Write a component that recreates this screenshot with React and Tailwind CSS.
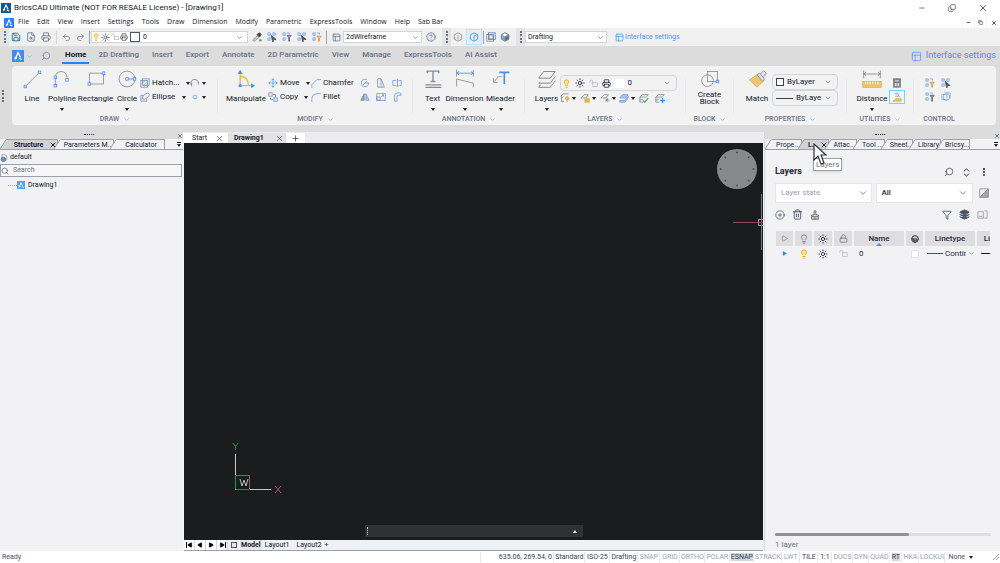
import { Search, X, Undo2, Redo2, Save, Printer, Lightbulb, Sun, ChevronDown, CirclePlus, Trash2, Funnel, Layers, FileSearch, EllipsisVertical, ChevronsUpDown, CircleQuestionMark, Minus, Copy, Plus, Lock, Contrast, PanelsTopLeft, Play, Move } from 'lucide-react'
import clsx from 'clsx'

const menus = ['File', 'Edit', 'View', 'Insert', 'Settings', 'Tools', 'Draw', 'Dimension', 'Modify', 'Parametric', 'ExpressTools', 'Window', 'Help', 'Sab Bar']
const ribbonTabs = ['Home', '2D Drafting', 'Insert', 'Export', 'Annotate', '2D Parametric', 'View', 'Manage', 'ExpressTools', 'AI Assist']

const statusFields = [
  { label: '635.06, 269.54, 0', width: 'w-[57px]', on: true },
  { label: 'Standard', width: 'w-[31px]', on: true },
  { label: 'ISO-25', width: 'w-[25px]', on: true },
  { label: 'Drafting', width: 'w-[28px]', on: true },
  { label: 'SNAP', width: 'w-[22px]' },
  { label: 'GRID', width: 'w-[20px]' },
  { label: 'ORTHO', width: 'w-[25px]' },
  { label: 'POLAR', width: 'w-[25px]' },
  { label: 'ESNAP', width: 'w-[24px]', on: true, fill: true },
  { label: 'STRACK', width: 'w-[28px]' },
  { label: 'LWT', width: 'w-[18px]' },
  { label: 'TILE', width: 'w-[18px]', on: true },
  { label: '1:1', width: 'w-[14px]', on: true },
  { label: 'DUCS', width: 'w-[21px]' },
  { label: 'DYN', width: 'w-[16px]' },
  { label: 'QUAD', width: 'w-[21px]' },
  { label: 'RT', width: 'w-[12px]', on: true, fill: true },
  { label: 'HKA', width: 'w-[17px]' },
  { label: 'LOCKUI', width: 'w-[26px]' },
]

function Svg({ box = 12, className = 'size-[10px]', children }) {
  return (
    <svg viewBox={`0 0 ${box} ${box}`} className={clsx('shrink-0', className)} fill="none" stroke="#868b93" strokeWidth="1" aria-hidden>
      {children}
    </svg>
  )
}

function Node({ x, y }) {
  return <rect x={x - 1.5} y={y - 1.5} width="3" height="3" fill="#fff" stroke="#4c8df5" />
}

function Logo({ className }) {
  return (
    <svg viewBox="0 0 12 12" className={clsx('block shrink-0', className)} fill="none" aria-hidden>
      <path d="M3 9.500 6 2.500 8.500 7.500" stroke="#fff" strokeWidth="1.300" />
      <path d="M2.500 7.500 5 8.200M7 8.500l3 1" stroke="#fff" strokeWidth="1.300" />
    </svg>
  )
}

function Caret({ className }) {
  return (
    <svg viewBox="0 0 4 3" className={clsx('h-[3px] w-[4px] shrink-0', className)} fill="#222" aria-hidden>
      <path d="M0 0h4L2 3z" />
    </svg>
  )
}

function Chevron({ className = 'size-[8px] text-gray-500' }) {
  return <ChevronDown className={clsx('pointer-events-none shrink-0', className)} strokeWidth={2} />
}

function Grip() {
  return <span className="h-[12px] border-l-2 border-dotted border-gray-500" />
}

function Combo({ label, value, className, selectClass, children, chevron }) {
  return (
    <div className={clsx('flex items-center', className)}>
      {children}
      <select aria-label={label} className={clsx('min-w-0 flex-1 appearance-none bg-transparent outline-none', selectClass)}>
        <option>{value}</option>
      </select>
      <Chevron className={chevron} />
    </div>
  )
}

/* 24 unit drawings for the big ribbon buttons */
const big = {
  line: <><path d="M4 21 21 4" /><Node x={4} y={21} /><Node x={21} y={4} /></>,
  polyline: <><path d="M4 20V10a7 7 0 0 1 14 0v3" /><Node x={4} y={20} /><Node x={4} y={10} /><Node x={18} y={13} /></>,
  rect: <><rect x="4" y="5" width="17" height="13" /><Node x={4} y={18} /><Node x={21} y={5} /></>,
  circle: <><circle cx="12" cy="12" r="9.5" /><path d="M12 12h9" stroke="#4c8df5" /><Node x={12} y={12} /><Node x={21} y={12} /></>,
  manipulate: <><path d="M5 3v17h15M5 9c7 0 10 4 10 11" stroke="#e8b748" strokeWidth="1.6" /><path d="M2 6l3-5 3 5zM18 17l5 3-5 3z" fill="#4c8df5" stroke="none" /><circle cx="5" cy="20" r="2" fill="#4c8df5" stroke="none" /></>,
  text: <><path d="M5 5V2.500h14V5M12 2.500V15M9 15h6" strokeWidth="1.600" /><path d="M3 19h19M3 22h19" strokeWidth="1.4" /></>,
  dimension: <><path d="M2 1v8M22 1v8" /><path d="M2 5h20M5 3 2 5l3 2M19 3l3 2-3 2" stroke="#4c8df5" /><path d="M2 21V12l20 5v5" /></>,
  mleader: <><path d="M10 4h12M16 4v14" stroke="#4c8df5" strokeWidth="2" /><path d="M13 9H9l-5 6M3 11v5h5" /></>,
  layers: <><path d="M2 11 8 3h14l-6 8zM4 15l-2 2h14l6-8M4 19l-2 3h14l6-8" strokeWidth="1.200" /></>,
  block: <><circle cx="9" cy="14" r="7" /><rect x="9" y="3" width="12" height="12" /><Node x={21} y={15} /></>,
  match: <><path d="m3 13 9-6 7 8-7 7z" fill="#ecc773" stroke="#d9aa45" /><path d="m12 7 3-2 6 7-2 3zM16 6l4-4 3 3-3 5" fill="#dfe3e8" /></>,
  distance: <><path d="M2 2v9M22 2v9M2 6h20M5 4 2 6l3 2M19 4l3 2-3 2" /><path d="M1 15h22v7H1z" fill="#ecc773" stroke="#d9aa45" /><path d="M4 15v3M7 15v3M10 15v3M13 15v3M16 15v3M19 15v3" stroke="#fff" /></>,
}

/* 12 unit drawings for the small ones */
const small = {
  hatch: <><rect x="1" y="3" width="8" height="8" /><rect x="3" y="1" width="8" height="8" stroke="#6f9de8" /><path d="m3 6 3-3M4 9l5-5M7 9l3-3" stroke="#6f9de8" /></>,
  ellipse: <><path d="M1 11V4h4M1 11h7V8" /><ellipse cx="7" cy="5" rx="5" ry="2.500" transform="rotate(-40 7 5)" stroke="#6f9de8" /></>,
  arc: <><path d="M2 9a4.500 4.500 0 1 1 8-3" stroke="#6f7680" /><path d="M2 6v4M10 5v3" stroke="#4c8df5" /></>,
  point: <circle cx="6" cy="6" r="2.300" stroke="#6fa4f5" />,
  copy: <><rect x="1" y="1" width="4" height="4" /><rect x="7" y="7" width="4" height="4" stroke="#4c8df5" /><path d="M3 7v2h3M6 3h3v3" stroke="#4c8df5" /></>,
  chamfer: <path d="M1 12V8l6-6h5" stroke="#6f9de8" />,
  fillet: <path d="M1 12V9q0-7 7-7h4" stroke="#6f9de8" />,
  rotate: <><circle cx="6" cy="6" r="4.500" stroke="#6f9de8" strokeDasharray="23 4" /><path d="M4 8l4-4M6 6h4" /></>,
  stretch: <><path d="M2 11V1h4l4 10z" /><path d="M6 1v10" stroke="#6f9de8" /></>,
  split: <><path d="M5 3H1v6h4M8 3h3v6H8" stroke="#6f9de8" /><path d="M6.500 1v10" /></>,
  mirror: <><path d="M5 2v8H1z" fill="#9ba1a9" /><path d="M7 2v8h4z" fill="#a9c7f6" stroke="#6f9de8" /></>,
  scale: <><rect x="1" y="2" width="10" height="8" stroke="#6f9de8" /><rect x="1" y="6" width="4" height="4" /><path d="M6 6l3-2.500M7 3.500h2v2" /></>,
  offset: <><path d="M3 11V5q0-4 4-4h2q2 0 2 3H8q-2 0-2 2v5z" stroke="#6f9de8" /></>,
  layerOn: <><path d="M1 4 4 1h6M1 7l3-3M1 10h4" /><path d="M2 2v8" /><circle cx="8.500" cy="6.500" r="2" fill="#f0b64a" stroke="#e2a33a" /><path d="M8.500 9v2" /></>,
  layerLock: <><path d="m1 6 4-4h5L7 6z" /><rect x="6" y="7" width="5" height="4" fill="#f0b64a" stroke="#e2a33a" /></>,
  layerFreeze: <><path d="m1 6 4-4h5L7 6z" /><path d="M8.500 6v5M6 8.500h5M7 7l3 3M10 7l-3 3" /></>,
  layerMatch: <><path d="m1 6 3-4h7L8 6zM1 9h6l4-5v2L7 11H1z" fill="#a8c8fa" stroke="#6f9de8" /></>,
  layerCheck: <><path d="m1 5 3-3h7L8 5zM1 8h4M1 11h4M1 5v6" /><path d="m5 9 2 2 4-5" stroke="#51b34c" strokeWidth="1.500" /></>,
  layerAdd: <><path d="m1 5 3-3h7L8 5zM1 8h4M1 11h4M1 5v6" /><path d="M9 6v6M6 9h6" stroke="#3f86f2" strokeWidth="1.500" /></>,
  calc: <><rect x="2" y="1" width="8" height="10" fill="#777b82" stroke="#777b82" /><path d="M3.500 3.500h5M4 6v4M6 6v4M8 6v4" stroke="#fff" /></>,
  area: <><path d="M1 11h10V8H5z" fill="#f0c56a" stroke="#dda73f" /><path d="M3 2h4l2 4M4 5h4" /></>,
  select: <><path d="M1 1h3v3H1zM7 1h3v3H7zM1 7h3v3H1z" stroke="#8fb2ea" fill="#bdd4f8" /><path d="m5 4 6 5H8l-1 3z" fill="#555" stroke="#555" /></>,
  filter: <><path d="M1 1h3v3H1zM1 7h3v3H1zM6 1h3v2" stroke="#8fb2ea" fill="#bdd4f8" /><path d="M6 4h5L9 7v4H8V7z" fill="#999fa8" stroke="#62676f" /></>,
  filterSun: <><path d="M1 1h3v3H1zM1 7h3v3H1zM6 1h3v2" stroke="#8fb2ea" fill="#bdd4f8" /><path d="M6 5h5L9 8v3H8V8z" fill="#f4c35c" stroke="#d49b35" /></>,
  isolate: <><circle cx="6.500" cy="6" r="4" stroke="#6f9de8" /><path d="M1 3h6v6H1zM4 1h7v7" stroke="#8fb2ea" /></>,
  picker: <><path d="m1 10 6-6 2 2-6 5z" fill="#cfd3d8" /><path d="m6 3 3-2 2 2-2 3z" fill="#444" stroke="#444" /><circle cx="10" cy="10" r="1.500" fill="#3fb649" stroke="none" /></>,
  cube: <path d="M6 1 1.500 3.500v5L6 11l4.500-2.500v-5zM6 4v5" />,
  cubeBlue: <><path d="M6 1 1.500 3.500v5L6 11l4.500-2.500v-5z" stroke="#4b83c9" /><path d="M6 9V5q2-2 3 0" stroke="#4b83c9" /></>,
  boxes: <><rect x="1" y="3" width="8" height="8" /><rect x="3" y="1" width="8" height="8" stroke="#4c7fd0" /><circle cx="6" cy="6" r="2.500" /></>,
  solid: <><path d="M6 1 1.500 3.500v5L6 11l4.500-2.500v-5z" fill="#8aa6cc" stroke="#5f7fae" /><path d="M6 1 1.500 3.500 6 6l4.500-2.500z" fill="#fff" /><path d="M6 6v5l4.500-2.500v-5z" fill="#4a6ea5" /></>,
  unlock: <><rect x="5" y="5" width="6" height="5" stroke="#b5b8bd" /><path d="M5 6V3.500a2 2 0 0 0-4 0V5" stroke="#b5b8bd" /></>,
  stamp: <><path d="M5 1h2v5h3v2H2V6h3zM2 8v3h8V8M5 9v2M7 9v2" stroke="#555" /></>,
  tree: <><path d="M3 1h5l2 2v6H3z" fill="#fff" stroke="#7f8893" /><circle cx="5" cy="8" r="3.500" fill="#6d90b7" stroke="#54779e" /></>,
}

function BigButton({ icon, label, className, arrow, iconClass = 'size-[20px]' }) {
  return (
    <button type="button" className={clsx('flex shrink-0 flex-col items-center', className)}>
      <Svg box={24} className={iconClass}>{big[icon]}</Svg>
      <span className="mt-1 flex h-[10px] items-center text-center leading-[7px]">{label}</span>
      {arrow && <Caret className="mt-[5px]" />}
    </button>
  )
}

function SmallButton({ icon, label, arrow, className }) {
  return (
    <button type="button" aria-label={label || icon} className={clsx('flex h-[14px] items-center gap-[2px]', className)}>
      {icon === 'move' ? <Move className="size-[10px] shrink-0 text-blue-400" /> : <Svg>{small[icon]}</Svg>}
      {label && <span className="grow text-left">{label}</span>}
      {arrow && <Caret className={label && 'mx-1'} />}
    </button>
  )
}

function Group({ title, className, children, plain, last }) {
  return (
    <section className={clsx('flex shrink-0 flex-col', className)}>
      <div className="flex h-[44px]">
        <div className="flex grow justify-center">{children}</div>
        {!last && <span className="mt-[10px] w-px bg-gray-200" />}
      </div>
      <h2 className="flex h-[12px] items-center justify-center gap-1 text-[7px] font-medium text-gray-500">
        {title}
        {!plain && <Chevron className="size-[7px] text-gray-400" />}
      </h2>
    </section>
  )
}

function TitleBar() {
  return (
    <header className="flex h-[15px] items-center bg-white pl-px">
      <span className="mr-[3px] bg-[#075b9c]"><Logo className="size-[10px]" /></span>
      <h1 className="text-[8px]">BricsCAD Ultimate (NOT FOR RESALE License) - [Drawing1]</h1>
      <div className="ml-auto flex items-center gap-[22px] pr-3 text-gray-700">
        <button type="button" aria-label="Minimize"><Minus className="size-[8px]" /></button>
        <button type="button" aria-label="Restore"><Copy className="size-[8px] -scale-x-100 rotate-180" /></button>
        <button type="button" aria-label="Close"><X className="size-[10px]" /></button>
      </div>
    </header>
  )
}

function MenuBar() {
  return (
    <nav className="flex h-[13px] items-center bg-white pt-[2px] pl-1 font-['Open_Sans',sans-serif] text-[7px]">
      <span className="mr-1 rounded-[1px] bg-blue-500"><Logo className="size-[10px]" /></span>
      <div className="flex gap-[8px]">
        {menus.map((m) => <button type="button" key={m}>{m}</button>)}
      </div>
      <div className="ml-auto flex h-full text-gray-600">
        <button type="button" aria-label="Minimize drawing" className="flex w-[13px] items-center justify-center border-x border-gray-100"><Minus className="size-[5px]" strokeWidth={4} /></button>
        <button type="button" aria-label="Restore drawing" className="flex w-[12px] items-center justify-center border-r border-gray-100"><Copy className="size-[5px]" strokeWidth={3} /></button>
        <button type="button" aria-label="Close drawing" className="flex w-[13px] items-center justify-center"><X className="size-[6px]" strokeWidth={4} /></button>
      </div>
    </nav>
  )
}

function Toolbar() {
  return (
    <div className="flex h-[18px] items-center bg-[#f0f0f1] text-[7px] text-gray-900">
      <span className="flex h-full w-[9px] items-center bg-[#e3e3e4] pl-1"><Grip /></span>
      <div className="flex items-center gap-[5px] pl-[2px] text-gray-500">
        <button type="button" aria-label="Save"><Save className="size-[10px] text-sky-700" /></button>
        <button type="button" aria-label="Preview"><FileSearch className="size-[10px]" /></button>
        <button type="button" aria-label="Print"><Printer className="size-[10px]" /></button>
        <span className="h-[13px] w-px bg-gray-300" />
        <button type="button" aria-label="Undo"><Undo2 className="size-[9px]" /></button>
        <button type="button" aria-label="Redo"><Redo2 className="size-[9px]" /></button>
        <span className="-ml-px h-[13px] w-px bg-gray-400" />
      </div>
      <Combo label="Layer" value="0" className="ml-px h-[12px] w-[157px] gap-px border border-gray-300 bg-white pr-1" selectClass="pl-[2px]" chevron="size-[7px] text-gray-600">
        <Lightbulb className="size-[8px] fill-amber-200 text-amber-500" />
        <Sun className="size-[9px] text-gray-700" />
        <Svg className="size-[8px]">{small.unlock}</Svg>
        <Printer className="size-[8px] text-gray-700" />
        <span className="ml-px size-[10px] border border-gray-600 bg-white" />
      </Combo>
      <div className="flex items-center gap-[5px] pl-1">
        {['picker', 'select', 'filter', 'select', 'filterSun'].map((n, i) => (
          <button type="button" key={i} aria-label={n}><Svg className="block size-[10px]">{small[n]}</Svg></button>
        ))}
        <span className="-ml-px h-[13px] w-px bg-gray-400" />
        <button type="button" aria-label="Visual styles"><PanelsTopLeft className="size-[9px] text-slate-500" /></button>
      </div>
      <Combo label="Visual style" value="2dWireframe" className="ml-[2px] h-[12px] w-[79px] border border-gray-300 bg-white px-[2px]" chevron="size-[7px] text-gray-600" />
      <button type="button" aria-label="Help" className="ml-1"><CircleQuestionMark className="size-[10px] text-slate-500" /></button>
      <span className="ml-[6px] flex h-full w-[9px] items-center bg-[#e3e3e4] pl-1"><Grip /></span>
      <div className="flex h-full items-center">
        <button type="button" aria-label="Wireframe" className="p-[2px]"><Svg>{small.cube}</Svg></button>
        <button type="button" aria-label="Hidden" className="mx-px border border-sky-200 bg-sky-100 p-[2px]"><Svg>{small.cubeBlue}</Svg></button>
        <span className="h-[13px] w-px bg-gray-400" />
        <button type="button" aria-label="Modeling" className="p-[2px]"><Svg>{small.boxes}</Svg></button>
        <button type="button" aria-label="Shaded" className="p-[2px]"><Svg>{small.solid}</Svg></button>
      </div>
      <span className="ml-1 flex h-full w-[9px] items-center bg-[#e3e3e4] pl-1"><Grip /></span>
      <Combo label="Workspace" value="Drafting" className="h-[12px] w-[82px] border border-gray-300 bg-white px-[2px]" chevron="size-[7px] text-gray-600" />
      <a href="#interface" className="ml-[8px] flex items-center gap-px text-[#5b93e6]">
        <PanelsTopLeft className="size-[9px]" />Interface settings
      </a>
    </div>
  )
}

function RibbonTabs() {
  return (
    <div className="flex h-[20px] items-center bg-[#dcdcdd] pl-[12px] text-[8px] text-gray-500">
      <button type="button" aria-label="Application menu" className="flex items-center gap-[2px]">
        <span className="bg-[#3f8cf4]"><Logo className="size-[12px]" /></span>
        <Chevron className="size-[7px] text-gray-400" />
      </button>
      <button type="button" aria-label="Search" className="ml-2"><Search className="size-[10px] -scale-x-100" strokeWidth={1.5} /></button>
      <div role="tablist" className="ml-[11px] flex gap-[13px] font-medium">
        {ribbonTabs.map((t) => (
          <button
            type="button"
            role="tab"
            key={t}
            aria-selected={t === 'Home'}
            className={clsx('h-[15px] border-b-2 pb-[3px]', t === 'Home' ? '-mr-1 border-blue-500 px-[3px] font-bold text-gray-900' : 'border-transparent')}
          >
            {t}
          </button>
        ))}
      </div>
      <a href="#interface" className="ml-auto flex items-center gap-1 pr-1 text-[9px] text-[#4f90f2]">
        <PanelsTopLeft className="size-[11px]" strokeWidth={1.5} />Interface settings
      </a>
    </div>
  )
}

function Ribbon() {
  return (
    <div className="flex bg-[#dcdcdd] pr-1 pb-[7px] text-[8px] text-gray-900">
      <span className="flex w-[12px] items-center pl-[2px]"><Grip /></span>
      <div className="flex grow rounded-[4px] bg-[#f2f2f3] pt-[3px]">
        <Group title="DRAW" className="w-[206px]">
          <BigButton icon="line" label="Line" className="w-[30px]" />
          <BigButton icon="polyline" label="Polyline" className="w-[30px]" arrow />
          <BigButton icon="rect" label="Rectangle" className="w-[37px]" />
          <BigButton icon="circle" label="Circle" className="w-[26px]" arrow />
          <div className="mt-[7px] grid grid-cols-[50px_22px] content-start">
            <SmallButton icon="hatch" label="Hatch..." arrow />
            <SmallButton icon="arc" arrow />
            <SmallButton icon="ellipse" label="Ellipse" arrow />
            <SmallButton icon="point" arrow />
          </div>
        </Group>
        <Group title="MODIFY" className="w-[195px]">
          <BigButton icon="manipulate" label="Manipulate" className="w-[40px]" />
          <div className="mt-[7px] ml-[2px] grid grid-cols-[43px_49px_16px_16px_12px] content-start">
            <SmallButton icon="move" label="Move" arrow />
            <SmallButton icon="chamfer" label="Chamfer" />
            <SmallButton icon="rotate" />
            <SmallButton icon="stretch" />
            <SmallButton icon="split" />
            <SmallButton icon="copy" label="Copy" arrow />
            <SmallButton icon="fillet" label="Fillet" />
            <SmallButton icon="mirror" />
            <SmallButton icon="scale" />
            <SmallButton icon="offset" />
          </div>
        </Group>
        <Group title="ANNOTATION" className="w-[112px]">
          <BigButton icon="text" label="Text" className="w-[26px]" arrow />
          <BigButton icon="dimension" label="Dimension" className="w-[38px]" arrow />
          <BigButton icon="mleader" label="Mleader" className="w-[34px]" arrow />
        </Group>
        <Group title="LAYERS" className="w-[161px]">
          <BigButton icon="layers" label="Layers" className="w-[26px]" arrow />
          <div className="mt-[6px] flex w-[117px] flex-col">
            <Combo label="Current layer" value="0" className="h-[16px] gap-1 rounded-sm border border-gray-300 px-px pr-[5px]">
              <Lightbulb className="size-[9px] shrink-0 fill-amber-200 text-amber-500" />
              <Sun className="size-[10px] shrink-0" />
              <Svg className="size-[9px]">{small.unlock}</Svg>
              <Printer className="size-[9px] shrink-0" />
              <span className="size-[9px] shrink-0 bg-white" />
            </Combo>
            <div className="flex">
              <SmallButton icon="layerOn" arrow className="w-[20px]" />
              <SmallButton icon="layerLock" arrow className="w-[20px]" />
              <SmallButton icon="layerFreeze" arrow className="w-[19px]" />
              <SmallButton icon="layerMatch" arrow className="w-[20px]" />
              <SmallButton icon="layerCheck" className="w-[16px]" />
              <SmallButton icon="layerAdd" className="w-[16px]" />
            </div>
          </div>
        </Group>
        <Group title="BLOCK" className="w-[48px]">
          <BigButton icon="block" label={<>Create<br />Block</>} className="w-[30px]" />
        </Group>
        <Group title="PROPERTIES" className="w-[113px]">
          <BigButton icon="match" label="Match" className="w-[30px]" />
          <div className="mt-[5px] flex w-[66px] flex-col">
            <Combo label="Color" value="ByLayer" className="h-[16px] gap-[3px] rounded-sm border border-gray-300 px-[3px] pr-[5px]">
              <span className="size-[8px] shrink-0 border border-gray-700 bg-white" />
            </Combo>
            <Combo label="Linetype" value="ByLayer" className="h-[16px] gap-[3px] rounded-sm border border-gray-300 px-[3px] pr-[5px]">
              <span className="h-px w-[17px] shrink-0 bg-gray-700" />
            </Combo>
          </div>
        </Group>
        <Group title="UTILITIES" className="w-[67px]">
          <BigButton icon="distance" label="Distance" className="w-[33px]" arrow />
          <div className="mt-[7px] flex flex-col">
            <SmallButton icon="calc" className="w-[16px] justify-center" />
            <SmallButton icon="area" className="w-[16px] justify-center border border-sky-300 bg-sky-50" />
          </div>
        </Group>
        <Group title="CONTROL" className="w-[50px]" plain last>
          <div className="mt-[7px] grid grid-cols-[16px_12px] content-start">
            <SmallButton icon="filterSun" />
            <SmallButton icon="select" />
            <SmallButton icon="filter" />
            <SmallButton icon="isolate" />
          </div>
        </Group>
      </div>
    </div>
  )
}

function DockHandle() {
  return (
    <div className="flex h-[7px] items-center bg-[#dcdcdd]">
      <span className="mb-[2px] ml-auto w-[10px] border-t border-dotted border-gray-800" />
      <button type="button" aria-label="Close panel" className="ml-auto"><X className="size-[6px] text-gray-600" strokeWidth={3} /></button>
    </div>
  )
}

function DockTab({ label, active, className, children }) {
  return (
    <div className={clsx('relative -ml-1 flex h-[10px] shrink-0 first:ml-0', className)}>
      <svg viewBox="0 0 8 10" className="h-[10px] w-[8px] shrink-0" fill={active ? '#d2d2d3' : '#f2f2f4'} stroke="#8b8b8e" strokeWidth=".8" aria-hidden>
        <path d="M0 10 5.500 1.500Q6 .5 8 .5V10" stroke="none" />
        <path d="M0 10 5.500 1.500Q6 .5 8 .5" />
      </svg>
      <div className={clsx('flex min-w-0 grow items-center border-t border-r border-gray-400', active && 'bg-[#d2d2d3] font-bold')}>
        <button type="button" className="min-w-0 grow text-center leading-[8px] whitespace-nowrap">{label}</button>
        {active && <button type="button" aria-label={`Close ${label}`}><X className="size-[8px]" strokeWidth={3} /></button>}
      </div>
      {children}
    </div>
  )
}

function DockTabs({ children }) {
  return (
    <div className="flex h-[11px] items-end border-b border-gray-400 text-[7px]">
      {children}
      <button type="button" aria-label="More tabs" className="mr-[2px] mb-[2px] ml-auto border-t border-black pt-px"><Caret /></button>
    </div>
  )
}

function StructurePanel() {
  return (
    <aside className="flex w-[183px] shrink-0 flex-col bg-[#f2f2f4] text-[7px]">
      <DockHandle />
      <DockTabs>
        <DockTab label="Structure" active className="w-[58px]" />
        <DockTab label="Parameters M.." className="w-[60px]" />
        <DockTab label="Calculator" className="w-[55px]" />
      </DockTabs>
      <div className="flex h-[14px] items-center gap-[2px] pt-px">
        <Svg className="size-[8px]">{small.tree}</Svg>default
      </div>
      <label className="mr-px flex h-[13px] items-center gap-1 border border-gray-400 bg-white/40">
        <Search className="size-[8px] text-gray-600" />
        <input type="search" aria-label="Search structure" placeholder="Search" className="min-w-0 grow bg-transparent outline-none placeholder:text-gray-500" />
      </label>
      <div className="flex h-[15px] items-center pt-px pl-2">
        <span className="w-[9px] border-t border-dotted border-gray-400" />
        <span className="mr-[3px] bg-blue-400"><Logo className="size-[8px]" /></span>
        Drawing1
      </div>
    </aside>
  )
}

function Canvas() {
  return (
    <main className="flex min-w-0 grow flex-col border-x border-[#f4f4f6] bg-[#ececee] text-[7px]">
      <div className="flex h-[11px] pt-px">
        <div className="flex w-[44px] items-center justify-between bg-white pr-1 pl-2">
          <button type="button">Start</button>
          <button type="button" aria-label="Close Start"><X className="size-[9px] text-gray-600" /></button>
        </div>
        <div className="flex w-[58px] items-center justify-between bg-[#e2e2e4] pr-[2px] pl-[6px] font-bold">
          <button type="button">Drawing1</button>
          <button type="button" aria-label="Close Drawing1"><X className="size-[9px] text-gray-600" /></button>
        </div>
        <button type="button" aria-label="New drawing" className="flex w-[19px] items-center justify-center bg-white"><Plus className="size-[9px] text-gray-700" /></button>
      </div>
      <div className="relative grow overflow-hidden bg-[#1b1c1e]">
        <svg viewBox="0 0 40 40" className="absolute top-[6px] right-[6px] size-[40px]" fill="#88898a" aria-hidden>
          <circle cx="20" cy="20" r="20" />
          <g fill="#4c4d50">
            {[0, 45, 90, 135, 180, 225, 270, 315].map((a) => <circle key={a} cx="20" cy="3.500" r="1" transform={`rotate(${a} 20 20)`} />)}
          </g>
        </svg>
        <svg viewBox="0 0 30 58" className="absolute top-[50px] right-0 h-[58px] w-[30px]" fill="none" aria-hidden>
          <path d="M28.500 1v56" stroke="#77787b" />
          <path d="M0 29.500h30" stroke="#8c4d56" />
          <rect x="25.500" y="26.500" width="6" height="6" stroke="#8d8e91" />
        </svg>
        <svg viewBox="0 0 56 56" className="absolute bottom-[42px] left-[48px] size-[56px]" fill="none" aria-hidden>
          <path d="M3.500 12v35.500H39" stroke="#c8c8c9" />
          <path d="M3.500 33.500h14v14" stroke="#8f5c62" />
          <path d="M3.500 33v14" stroke="#1c9a3c" />
          <path d="M4 47.500h14" stroke="#b0444c" />
          <path d="m1 1 2.500 3.500L6 1M3.500 4.500V8" stroke="#239b43" />
          <path d="m43 44 6 7M49 44l-6 7" stroke="#ad5068" />
          <path d="m8 37 2 7 2-6 2 6 2-7" stroke="#b9babc" />
        </svg>
        <div className="absolute bottom-[3px] left-1/2 flex h-[12px] w-[218px] -translate-x-1/2 items-center justify-between bg-[#2f3234] px-[2px]">
          <span className="h-[8px] border-l border-dotted border-gray-300" />
          <button type="button" aria-label="Expand command line" className="mr-1"><Caret className="block rotate-180 invert" /></button>
        </div>
      </div>
      <div className="flex h-[11px] items-center gap-[3px] border-b border-gray-400 bg-[#eff0f3]">
        <div className="flex h-full items-center bg-white">
          {['First', 'Previous', 'Next', 'Last'].map((n, i) => (
            <button type="button" key={n} aria-label={`${n} layout`} className="flex h-full w-[11px] items-center justify-center border-r border-gray-300">
              {i === 0 && <span className="h-[6px] w-px bg-black" />}
              <Play className={clsx('size-[6px] fill-black', i < 2 && 'rotate-180')} />
              {i === 3 && <span className="h-[6px] w-px bg-black" />}
            </button>
          ))}
        </div>
        <span className="h-[6px] w-[6px] border border-gray-600 bg-gray-200" />
        <button type="button" className="bg-gray-200 px-px font-bold">Model</button>
        <button type="button">Layout1</button>
        <button type="button" className="ml-1">Layout2</button>
        <button type="button" aria-label="Add layout">+</button>
      </div>
    </main>
  )
}

function LayersPanel() {
  const th = 'h-[15px] bg-[#dedee0] p-0 font-medium'
  return (
    <aside className="flex w-[236px] shrink-0 flex-col border-l border-gray-300 bg-[#f2f2f4] text-[8px] text-gray-800">
      <DockHandle />
      <DockTabs>
        <DockTab label="Prope.." className="w-[37px]" />
        <DockTab label="L..." active className="w-[31px]">
          {/* pointer and its tooltip */}
          <span className="absolute top-[19px] left-[15px] z-10 border border-gray-400 bg-white px-[2px] text-[8px] leading-[11px] text-gray-500 shadow-sm">Layers</span>
          <svg viewBox="0 0 14 22" className="absolute top-[4px] left-[15px] z-20 h-[22px] w-[14px]" fill="#fff" stroke="#333" strokeWidth="1.200" aria-hidden>
            <path d="M1 1v16l4-4 3 8 3-1-3-8h5z" />
          </svg>
        </DockTab>
        <DockTab label="Attac..." className="w-[32px]" />
        <DockTab label="Tool ..." className="w-[32px]" />
        <DockTab label="Sheet.." className="w-[32px]" />
        <DockTab label="Library" className="w-[32px]" />
        <DockTab label="Bricsy..." className="w-[33px]" />
      </DockTabs>
      <div className="flex grow flex-col pr-2 pl-[10px]">
        <div className="mt-[15px] flex h-[14px] items-center">
          <h2 className="text-[9px] font-bold">Layers</h2>
          <div className="ml-auto flex gap-[7px] pr-[3px]">
            <button type="button" aria-label="Find"><Search className="size-[10px] -scale-x-100" strokeWidth={1.5} /></button>
            <button type="button" aria-label="Sort"><ChevronsUpDown className="size-[11px]" /></button>
            <button type="button" aria-label="Options"><EllipsisVertical className="size-[10px]" strokeWidth={3} /></button>
          </div>
        </div>
        <div className="mt-[4px] flex h-[20px] items-center gap-1">
          <Combo label="Layer state" value="Layer state" className="h-full flex-1 border border-gray-200 bg-white px-[5px] pr-[3px] text-gray-400" chevron="size-[10px] text-gray-500" />
          <Combo label="Layer filter" value="All" className="h-full flex-1 border border-gray-200 bg-white px-[5px] pr-1 font-medium" chevron="size-[10px] text-gray-500" />
          <button type="button" aria-label="Invert filter" className="mr-[3px] ml-[2px]">
            <Svg box={12}><path d="M1 1h10v10H1z" /><path d="M11 1v10H1z" fill="#a5a7aa" /></Svg>
          </button>
        </div>
        <div className="mt-[6px] flex h-[11px] items-center gap-[7px] text-gray-600">
          <button type="button" aria-label="New layer"><CirclePlus className="size-[10px]" strokeWidth={1.800} /></button>
          <button type="button" aria-label="Delete layer"><Trash2 className="size-[11px]" /></button>
          <button type="button" aria-label="Purge"><Svg>{small.stamp}</Svg></button>
          <button type="button" aria-label="Filter" className="ml-auto"><Funnel className="size-[10px]" /></button>
          <button type="button" aria-label="Layer settings"><Layers className="size-[11px] fill-gray-600" /></button>
          <button type="button" aria-label="Columns" className="mr-1">
            <Svg className="size-[11px]"><path d="M1 3h6v7H1zM2 8h4M8 2h3v8H8" stroke="#a2a5a9" /></Svg>
          </button>
        </div>
        <div className="mt-[11px] -ml-px overflow-hidden">
          <table className="w-full table-fixed border-separate border-spacing-x-[2px] border-spacing-y-0 text-[8px]">
            <colgroup>
              <col className="w-[17px]" /><col className="w-[17px]" /><col className="w-[18px]" /><col className="w-[18px]" />
              <col /><col className="w-[17px]" /><col className="w-[50px]" /><col className="w-[13px]" />
            </colgroup>
            <thead>
              <tr>
                <th className={th} aria-label="Current"><Play className="mx-auto size-[7px] text-gray-500" /></th>
                <th className={th} aria-label="On"><Lightbulb className="mx-auto size-[10px] text-gray-500" /></th>
                <th className={th} aria-label="Freeze"><Sun className="mx-auto size-[10px]" /></th>
                <th className={th} aria-label="Lock"><Lock className="mx-auto size-[9px] text-gray-500" /></th>
                <th className={clsx(th, 'relative')} aria-sort="ascending">
                  Name
                  <svg viewBox="0 0 6 3" className="absolute bottom-0 left-1/2 h-[3px] w-[6px] -translate-x-1/2" fill="#4a90e2" aria-hidden><path d="M0 3 3 0l3 3z" /></svg>
                </th>
                <th className={th} aria-label="Color"><Contrast className="mx-auto size-[8px] rotate-90" strokeWidth={3} /></th>
                <th className={th}>Linetype</th>
                <th className={clsx(th, 'overflow-hidden text-right')}>Li</th>
              </tr>
            </thead>
            <tbody>
              <tr className="h-[15px]">
                <td className="p-0"><Play className="mx-auto size-[5px] fill-blue-500 text-blue-500" /></td>
                <td className="p-0"><Lightbulb className="mx-auto size-[10px] fill-amber-200 text-amber-500" /></td>
                <td className="p-0"><Sun className="mx-auto size-[10px]" /></td>
                <td className="p-0"><Svg className="mx-auto size-[9px]">{small.unlock}</Svg></td>
                <td className="p-0 pl-[5px]">0</td>
                <td className="p-0"><span className="mx-auto block size-[8px] border border-gray-200 bg-white" /></td>
                <td className="p-0">
                  <Combo label="Layer linetype" value="Continuous" className="gap-[2px] pl-[2px]" chevron="size-[7px] text-gray-500">
                    <span className="h-px w-[16px] shrink-0 bg-gray-600" />
                  </Combo>
                </td>
                <td className="p-0"><span className="ml-1 block h-px bg-gray-900" /></td>
              </tr>
            </tbody>
          </table>
        </div>
        <div className="mt-auto mr-px h-[3px] rounded bg-[#dedede]">
          <div className="h-full w-[62%] rounded bg-[#929294]" />
        </div>
        <p className="flex h-[15px] items-center pt-[2px] text-gray-500">1 layer</p>
      </div>
    </aside>
  )
}

function StatusBar() {
  return (
    <footer className="flex h-[12px] items-center bg-white pl-[2px] text-[7px] text-gray-600">
      <span>Ready</span>
      <div className="ml-auto flex h-[10px] items-center border-l border-gray-200 pl-[16px]">
        {statusFields.map((f) => (
          <button
            type="button"
            key={f.label}
            className={clsx('flex h-[10px] shrink-0 items-center justify-center border-r border-gray-200 whitespace-nowrap', f.width, f.on ? 'text-gray-700' : 'text-gray-400')}
          >
            <span className={clsx('leading-[8px]', f.fill && 'bg-gray-300')}>{f.label}</span>
          </button>
        ))}
        <button type="button" className="flex items-center gap-1 pl-[3px]">None<Caret /></button>
      </div>
      <svg viewBox="0 0 6 6" className="mr-px ml-[20px] size-[6px]" stroke="#9a9a9a" aria-hidden><path d="M0 6 6 0M3 6l3-3" /></svg>
    </footer>
  )
}

export default function App() {
  return (
    <div className="flex h-screen w-full flex-col overflow-hidden bg-[#dcdcdd] font-['Roboto',sans-serif] text-gray-900">
      <TitleBar />
      <MenuBar />
      <Toolbar />
      <RibbonTabs />
      <Ribbon />
      <div className="flex min-h-0 grow">
        <StructurePanel />
        <Canvas />
        <LayersPanel />
      </div>
      <StatusBar />
    </div>
  )
}
